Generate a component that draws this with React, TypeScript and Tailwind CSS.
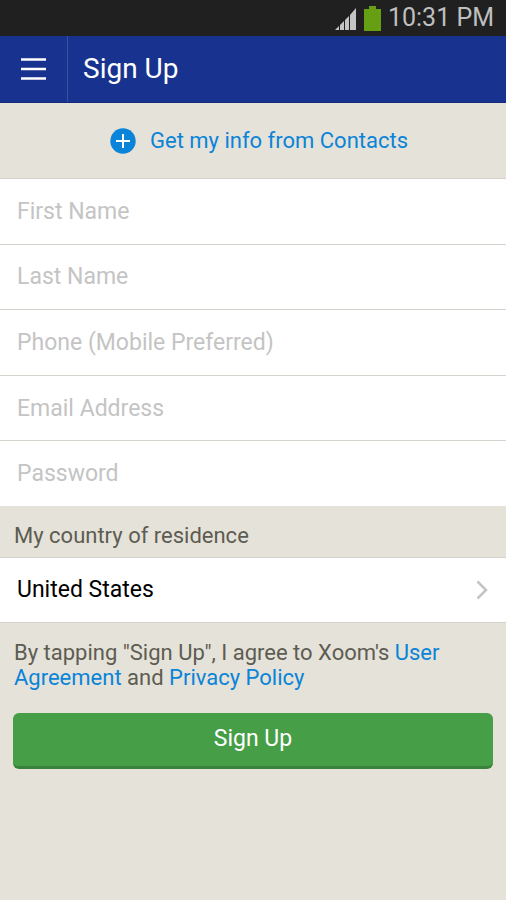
import * as React from "react";

const fields = [
  { label: "First Name", type: "text" },
  { label: "Last Name", type: "text" },
  { label: "Phone (Mobile Preferred)", type: "tel" },
  { label: "Email Address", type: "email" },
  { label: "Password", type: "password" },
];

function StatusBar() {
  return (
    <div className="flex h-9 items-center justify-end bg-[#202020] pr-3 text-[#bfbfbf]">
      <svg width="22" height="23" viewBox="0 0 22 23" className="mr-[7px]">
        <path d="M0 23h4v-4zM5 18l4-4v9H5zM10 13l4-4v14h-4zM15 8l6-7v22h-6z" fill="#c4c4c4" />
      </svg>
      <svg width="17" height="25" viewBox="0 0 17 25" className="mr-[7px]">
        <path d="M5 0h7v3h5v22H0V3h5z" fill="#669f14" />
      </svg>
      <span className="text-[25px] leading-9">10:31 PM</span>
    </div>
  );
}

function Header() {
  return (
    <header className="flex h-[67px] items-center border-b border-[#122a7c] bg-[#18328f] text-white">
      <button className="flex h-full w-17 items-center justify-center border-r border-[#3b509f]">
        <svg width="25" height="22" viewBox="0 0 25 22">
          <path d="M0 1.5h25M0 11h25M0 20.5h25" stroke="#fff" strokeWidth="2.5" />
        </svg>
      </button>
      <h1 className="pl-[15px] text-[28px]">Sign Up</h1>
    </header>
  );
}

export default function App() {
  return (
    <div className="min-h-[900px] w-[506px] bg-[#e5e2d9] font-['Roboto',sans-serif]">
      <StatusBar />
      <Header />
      <button className="flex h-[75px] w-full items-center pl-[110px] text-[22px] text-[#0a84d8]">
        <svg width="26" height="26" viewBox="0 0 26 26" className="mr-[14px]">
          <circle cx="13" cy="13" r="12.7" fill="#0a84d8" />
          <path d="M6 13h14M13 6v14" stroke="#fff" strokeWidth="2" />
        </svg>
        Get my info from Contacts
      </button>
      <div className="bg-white">
        {fields.map((field) => (
          <input
            key={field.label}
            type={field.type}
            placeholder={field.label}
            className="block h-[65.6px] w-full border-t border-[#d4d2cb] px-[17px] text-[23px] text-black outline-none placeholder:text-[#c4c4c4]"
          />
        ))}
      </div>
      <p className="h-[51px] px-[14px] pt-[14px] text-[22px] leading-8 text-[#5d5c52]">My country of residence</p>
      <button className="flex h-[66px] w-full items-center justify-between border-y border-[#d4d2cb] bg-white pr-[18px] pl-[17px] text-[23px]">
        United States
        <svg width="12" height="20" viewBox="0 0 12 20">
          <path d="M1.5 1.5l8.5 8.5-8.5 8.5" stroke="#c4c4c4" strokeWidth="2.5" fill="none" />
        </svg>
      </button>
      <p className="px-[14px] pt-[17px] text-[22px] leading-[25px] text-[#5d5c52]">
        By tapping "Sign Up", I agree to Xoom's <a className="text-[#0a84d8]">User<br />Agreement</a> and{" "}
        <a className="text-[#0a84d8]">Privacy Policy</a>
      </p>
      <div className="px-[13px] pt-[23px]">
        <button className="h-14 w-full rounded-md border-b-[3px] border-[#388339] bg-[#469e47] text-[23px] text-white">Sign Up</button>
      </div>
    </div>
  );
}
